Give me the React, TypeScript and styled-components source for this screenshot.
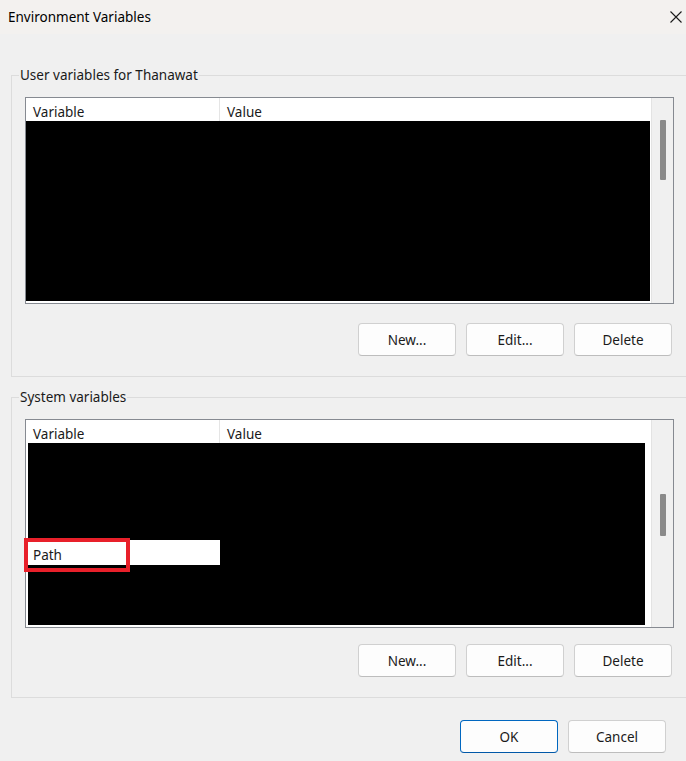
import React from "react";
import styled, { createGlobalStyle } from "styled-components";

const Global = createGlobalStyle`
  html, body { margin: 0; padding: 0; }
  body {
    width: 686px;
    height: 761px;
    overflow: hidden;
    background: #f0f0f0;
    font-family: "Noto Sans", "Segoe UI", sans-serif;
    font-size: 13.5px;
    color: #000;
  }
`;

const Window = styled.div`
  width: 686px;
  height: 761px;
  display: flex;
  flex-direction: column;
  background: #f0f0f0;
  overflow: hidden;
`;

const TitleBar = styled.div`
  height: 33px;
  flex: none;
  display: flex;
  align-items: center;
  justify-content: space-between;
  padding: 0 3px 1px 8px;
  background: #f3f1ef;
  font-size: 13.5px;
`;

const CloseBtn = styled.div`
  width: 14px;
  height: 14px;
  display: flex;
  align-items: center;
  justify-content: center;
`;

const Body = styled.div`
  display: flex;
  flex-direction: column;
  padding-left: 11px;
`;

const Group = styled.fieldset<{ $top: number; $bottom: number }>`
  margin: ${(p) => p.$top}px 0 0 0;
  padding: 0 0 ${(p) => p.$bottom}px 13px;
  width: 700px;
  min-width: 0;
  box-sizing: border-box;
  border: 1px solid #dcdcdc;
  border-radius: 0;
`;

const Legend = styled.legend`
  margin-left: -6px;
  padding: 0 1px;
  line-height: 18px;
  font-size: 13.5px;
  color: #1a1a1a;
`;

const ListBox = styled.div<{ $top: number; $height: number }>`
  margin-top: ${(p) => p.$top}px;
  width: 649px;
  height: ${(p) => p.$height}px;
  box-sizing: border-box;
  border: 1px solid #868a91;
  background: #fff;
  display: flex;
`;

const ListMain = styled.div`
  flex: 1;
  display: flex;
  flex-direction: column;
  min-width: 0;
`;

const HeaderRow = styled.div`
  height: 23px;
  flex: none;
  display: flex;
  background: #fff;
`;

const HeaderCell = styled.div<{ $w?: number }>`
  ${(p) => (p.$w ? `width: ${p.$w}px; flex: none;` : "flex: 1;")}
  box-sizing: border-box;
  padding: 5px 0 0 7px;
  line-height: 18px;
  border-right: ${(p) => (p.$w ? "1px solid #e5e5e5" : "none")};
  color: #1a1a1a;
`;

const RowsArea = styled.div<{ $inset: number }>`
  flex: 1;
  display: flex;
  flex-direction: column;
  margin: 0 ${(p) => (p.$inset ? 5 : 0)}px 2px ${(p) => p.$inset}px;
`;

const Redacted = styled.div<{ $h?: number }>`
  background: #000;
  ${(p) => (p.$h ? `height: ${p.$h}px; flex: none;` : "flex: 1;")}
`;

const PathRow = styled.div`
  height: 25px;
  flex: none;
  display: flex;
  position: relative;
`;

const PathCell = styled.div`
  width: 192px;
  flex: none;
  background: #fff;
  display: flex;
  align-items: center;
  padding: 5px 0 0 5px;
  box-sizing: border-box;
  color: #1a1a1a;
`;

const Highlight = styled.div`
  position: absolute;
  left: -4px;
  top: -2px;
  width: 106px;
  height: 34px;
  box-sizing: border-box;
  border: 4px solid #e8202a;
  pointer-events: none;
`;

const Track = styled.div<{ $thumbTop: number }>`
  width: 22px;
  flex: none;
  background: #f0f0f0;
  border-left: 1px solid #e3e3e3;
  margin-left: 1px;
  box-sizing: border-box;
  padding-top: ${(p) => p.$thumbTop}px;
  display: flex;
  justify-content: center;
`;

const Thumb = styled.div<{ $h: number }>`
  width: 6px;
  height: ${(p) => p.$h}px;
  background: #8a8a8a;
  border-radius: 1px;
`;

const ButtonRow = styled.div<{ $top: number }>`
  margin-top: ${(p) => p.$top}px;
  width: 647px;
  display: flex;
  justify-content: flex-end;
  gap: 10px;
`;

const Button = styled.button<{ $primary?: boolean }>`
  width: 98px;
  height: 33px;
  box-sizing: border-box;
  border: 1px solid ${(p) => (p.$primary ? "#0067c0" : "#d0d0d0")};
  border-bottom-color: ${(p) => (p.$primary ? "#0058a8" : "#bdbdbd")};
  border-radius: 4px;
  background: #fdfdfd;
  font-family: "Noto Sans", "Segoe UI", sans-serif;
  font-size: 13.5px;
  color: #1a1a1a;
  padding: 0;
`;

const Footer = styled.div`
  margin-top: 22px;
  padding-right: 20px;
  display: flex;
  justify-content: flex-end;
  gap: 10px;
`;

const Buttons = () => (
  <>
    <Button>New...</Button>
    <Button>Edit...</Button>
    <Button>Delete</Button>
  </>
);

export default function App() {
  return (
    <Window>
      <Global />
      <TitleBar>
        <span>Environment Variables</span>
        <CloseBtn>
          <svg width="12" height="12" viewBox="0 0 12 12">
            <path d="M0.5 0.5 L11.5 11.5 M11.5 0.5 L0.5 11.5" stroke="#1a1a1a" strokeWidth="1.1" />
          </svg>
        </CloseBtn>
      </TitleBar>
      <Body>
        <Group $top={32} $bottom={20}>
          <Legend>User variables for Thanawat</Legend>
          <ListBox $top={13} $height={207}>
            <ListMain>
              <HeaderRow>
                <HeaderCell $w={194}>Variable</HeaderCell>
                <HeaderCell>Value</HeaderCell>
              </HeaderRow>
              <RowsArea $inset={0}>
                <Redacted />
              </RowsArea>
            </ListMain>
            <Track $thumbTop={22}>
              <Thumb $h={60} />
            </Track>
          </ListBox>
          <ButtonRow $top={19}>
            <Buttons />
          </ButtonRow>
        </Group>
        <Group $top={11} $bottom={20}>
          <Legend>System variables</Legend>
          <ListBox $top={13} $height={209}>
            <ListMain>
              <HeaderRow>
                <HeaderCell $w={194}>Variable</HeaderCell>
                <HeaderCell>Value</HeaderCell>
              </HeaderRow>
              <RowsArea $inset={2}>
                <Redacted $h={97} />
                <PathRow>
                  <PathCell>Path</PathCell>
                  <Redacted />
                  <Highlight />
                </PathRow>
                <Redacted />
              </RowsArea>
            </ListMain>
            <Track $thumbTop={74}>
              <Thumb $h={42} />
            </Track>
          </ListBox>
          <ButtonRow $top={16}>
            <Buttons />
          </ButtonRow>
        </Group>
        <Footer>
          <Button $primary>OK</Button>
          <Button>Cancel</Button>
        </Footer>
      </Body>
    </Window>
  );
}
